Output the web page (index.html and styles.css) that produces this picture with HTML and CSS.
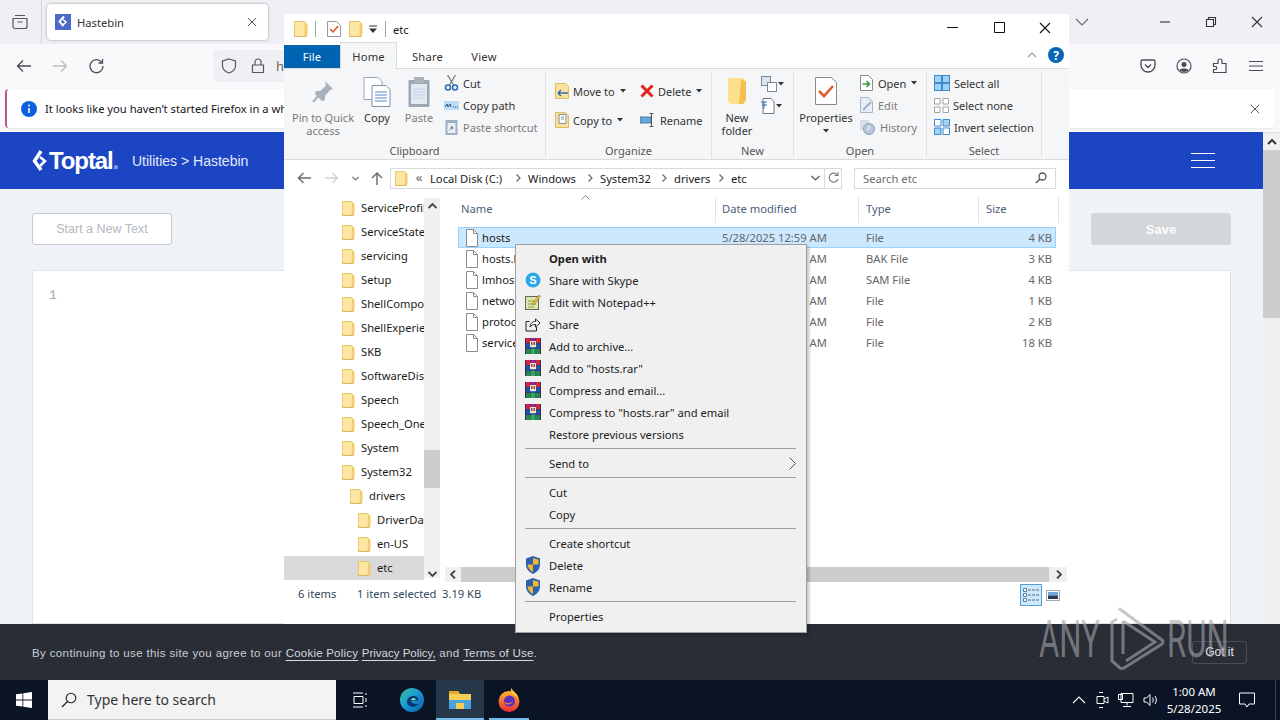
FILE: index.html
```html
<!DOCTYPE html>
<html lang="en">
<head>
<meta charset="utf-8">
<title>Hastebin</title>
<link rel="stylesheet" href="styles.css">
</head>
<body>
<svg class="sprite" aria-hidden="true">
  <symbol id="folder" viewBox="0 0 14 18">
    <path d="M.5 1.500h10l1 1v14H.5z" fill="#fde7a3" stroke="#e3c36f"/>
    <path d="M10.500 2l3 2v11l-2 2h-1z" fill="#f3cd6d"/>
    <path d="M.5 16.500h12" stroke="#dcb65a"/>
  </symbol>
  <symbol id="file" viewBox="0 0 14 18">
    <path d="M1.500 .5h7l4 4v13h-11z" fill="#fff" stroke="#8d8d8d"/>
    <path d="M8.500 .5v4h4" fill="none" stroke="#8d8d8d"/>
  </symbol>
  <symbol id="rar" viewBox="0 0 16 16">
    <rect width="16" height="16" fill="#3b2a55"/>
    <rect x="1" y="0" width="4" height="5" fill="#d0263f"/><rect x="11" y="0" width="4" height="5" fill="#d0263f"/><rect x="5.500" y="0" width="5" height="5" fill="#a3218a"/>
    <rect x="1" y="5.500" width="4" height="5" fill="#2450a8"/><rect x="11" y="5.500" width="4" height="5" fill="#2450a8"/><rect x="5.500" y="5.500" width="5" height="5" fill="#2f7fd0"/>
    <rect x="1" y="11" width="4" height="5" fill="#24894a"/><rect x="11" y="11" width="4" height="5" fill="#24894a"/><rect x="5.500" y="11" width="5" height="5" fill="#30a860"/>
    <rect x="5" y="3" width="6" height="6" fill="#f0e6c8"/>
    <path d="M6.800 4v3M9.200 4v3" stroke="#7a2030" stroke-width="1.200"/>
  </symbol>
  <symbol id="shield" viewBox="0 0 16 18">
    <path d="M8 0l7 2.500v6c0 4.500-3 7.500-7 9.500-4-2-7-5-7-9.500v-6z" fill="#2a62b0"/>
    <path d="M8 2v6.500h5.500V3.800zM8 8.500H2.600C3 12 5 14.500 8 16z" fill="#f3b72e"/>
  </symbol>
  <symbol id="x" viewBox="0 0 12 12"><path d="M1 1l10 10M11 1L1 11" fill="none" stroke="currentColor" stroke-width="1.100"/></symbol>
  <symbol id="caret" viewBox="0 0 6 4"><path d="M0 0h6L3 3.500z" fill="#333"/></symbol>
  <symbol id="crumb" viewBox="0 0 20 10"><path d="M8.500 1.500L12 5 8.500 8.500" fill="none" stroke="#666" stroke-width="1.200"/></symbol>
</svg>

<div class="browser">
  <header class="tabbar">
    <div class="tabs-btn">
      <svg width="16" height="16" viewBox="0 0 16 16"><path d="M3 1.500h10M1 4.500h14v8a2 2 0 0 1-2 2H3a2 2 0 0 1-2-2zM5.500 8h5" fill="none" stroke="#55555e" stroke-width="1.200"/></svg>
    </div>
    <div class="tab">
      <svg class="favicon" width="16" height="16" viewBox="0 0 16 16"><rect width="16" height="16" fill="#4a69c9"/><path d="M9 2.500l-4.500 5 4 4.500" fill="none" stroke="#fff" stroke-width="2"/><path d="M8 5.500l3 2.500-3 3" fill="none" stroke="#fff" stroke-width="1.500"/></svg>
      <span class="tab-title">Hastebin</span>
      <svg class="tab-close" width="10" height="10"><use href="#x"/></svg>
    </div>
    <div class="spacer"></div>
    <svg class="tab-chev" width="14" height="8" viewBox="0 0 14 8"><path d="M1 1l6 6 6-6" fill="none" stroke="#6a6a72" stroke-width="1.100"/></svg>
    <div class="winctl">
      <svg width="12" height="12" viewBox="0 0 12 12"><path d="M1 6h10" stroke="#333" stroke-width="1.100"/></svg>
      <svg width="12" height="12" viewBox="0 0 12 12"><path d="M1.500 3.500h7v7h-7zM3.500 3.500v-2h7v7h-2" fill="none" stroke="#333" stroke-width="1.100"/></svg>
      <svg width="12" height="12"><use href="#x"/></svg>
    </div>
  </header>

  <nav class="navbar">
    <svg class="nav-ico" width="16" height="16" viewBox="0 0 16 16"><path d="M15 8H2M7 2.500L1.500 8 7 13.500" fill="none" stroke="#4a4a52" stroke-width="1.300"/></svg>
    <svg class="nav-ico" width="16" height="16" viewBox="0 0 16 16"><path d="M1 8h13M9 2.500L14.500 8 9 13.500" fill="none" stroke="#bdbdc3" stroke-width="1.300"/></svg>
    <svg class="nav-ico" width="16" height="16" viewBox="0 0 16 16"><path d="M13.500 4A6.500 6.500 0 1 0 15 8M14.500 1v4h-4" fill="none" stroke="#4a4a52" stroke-width="1.300"/></svg>
    <div class="urlbar">
      <svg width="16" height="16" viewBox="0 0 16 16"><path d="M8 1l6.500 2v5c0 3.500-3 5.800-6.500 7-3.500-1.200-6.500-3.500-6.500-7V3z" fill="none" stroke="#55555e" stroke-width="1.200"/></svg>
      <svg width="14" height="16" viewBox="0 0 14 16"><path d="M1.500 7h11v7.500h-11zM4 7V4a3 3 0 0 1 6 0v3" fill="none" stroke="#55555e" stroke-width="1.200"/></svg>
      <span class="url-text">h</span>
    </div>
    <div class="spacer"></div>
    <svg class="nav-r" width="16" height="16" viewBox="0 0 16 16"><path d="M2.500 2h11A1.500 1.500 0 0 1 15 3.500V7A7 7 0 0 1 1 7V3.500A1.500 1.500 0 0 1 2.500 2zM5 6.500L8 9.500l3-3" fill="none" stroke="#4a4a52" stroke-width="1.300"/></svg>
    <svg class="nav-r" width="16" height="16" viewBox="0 0 16 16"><circle cx="8" cy="8" r="7" fill="none" stroke="#4a4a52" stroke-width="1.200"/><circle cx="8" cy="6.500" r="2.500" fill="#4a4a52"/><path d="M3.500 12c1-2 8-2 9 0-2 2.500-7 2.500-9 0z" fill="#4a4a52"/></svg>
    <svg class="nav-r" width="16" height="16" viewBox="0 0 16 16"><path d="M1.500 5.500H6V3a2 2 0 0 1 4 0v2.500h4v9H1.500v-3H4a2 2 0 0 0 0-3H1.500z" fill="none" stroke="#4a4a52" stroke-width="1.200"/></svg>
    <svg class="nav-r" width="16" height="16" viewBox="0 0 16 16"><path d="M1 3.500h14M1 8h14M1 12.500h14" stroke="#4a4a52" stroke-width="1.200"/></svg>
  </nav>

  <div class="infobar">
    <div class="info-inner">
      <svg class="info-ico" width="16" height="16" viewBox="0 0 16 16"><circle cx="8" cy="8" r="8" fill="#0a60df"/><path d="M8 7v5" stroke="#fff" stroke-width="1.600"/><circle cx="8" cy="4.600" r="1" fill="#fff"/></svg>
      <span class="info-text">It looks like you haven’t started Firefox in a while. Do you want to clean it up?</span>
      <svg class="info-close" width="10" height="10"><use href="#x"/></svg>
    </div>
  </div>

  <div class="page">
    <div class="page-main">
      <div class="site">
        <div class="site-header">
          <svg class="brand-mark" width="16" height="24" viewBox="0 0 16 24"><path d="M9 2L2.500 12 9 21" fill="none" stroke="#fff" stroke-width="3.500"/><path d="M8 8l5 4-5 5" fill="none" stroke="#fff" stroke-width="2.500"/></svg>
          <span class="brand">Toptal<span class="brand-dot">.</span></span>
          <span class="crumbs">Utilities &gt; Hastebin</span>
          <div class="spacer"></div>
          <div class="hamburger"><i></i><i></i><i></i></div>
        </div>
        <div class="site-body">
          <div class="actions">
            <button class="btn btn-new" type="button">Start a New Text</button>
            <button class="btn btn-save" type="button">Save</button>
          </div>
          <div class="editor"><span class="line-no">1</span></div>
        </div>
      </div>
      <div class="vscroll">
        <div class="vs-up"><svg width="10" height="6" viewBox="0 0 10 6"><path d="M1 5l4-4 4 4" fill="none" stroke="#333" stroke-width="2"/></svg></div>
        <div class="vs-thumb"></div>
      </div>
    </div>
    <div class="cookie">
      <span class="cookie-text">By continuing to use this site you agree to our <a>Cookie Policy</a> <a class="tight">Privacy Policy,</a> and <a>Terms of Use</a>.</span>
      <button class="got" type="button">Got it</button>
    </div>
  </div>

  <footer class="taskbar">
    <div class="start"><svg width="16" height="16" viewBox="0 0 16 16"><path d="M0 2.300l6.500-.9v6.200H0zM7.300 1.300L16 0v7.600H7.300zM0 8.400h6.500v6.200L0 13.700zM7.300 8.400H16V16l-8.700-1.300z" fill="#fff"/></svg></div>
    <div class="search">
      <svg width="16" height="16" viewBox="0 0 16 16"><circle cx="10" cy="6" r="4.800" fill="none" stroke="#222" stroke-width="1.100"/><path d="M6.500 9.500L1 15" stroke="#222" stroke-width="1.300"/></svg>
      <span>Type here to search</span>
    </div>
    <div class="tb-btn"><svg width="16" height="16" viewBox="0 0 16 16"><path d="M1 1h10M1 15h10M2 4.500h9v7H2zM14 1v2M14 6v4M14 13v2" fill="none" stroke="#fff"/></svg></div>
    <div class="tb-btn"><svg width="26" height="26" viewBox="0 0 26 26"><defs><linearGradient id="edgeg" x1="0" y1="0" x2="1" y2="1"><stop offset="0" stop-color="#35c98f"/><stop offset=".45" stop-color="#1b9bd8"/><stop offset="1" stop-color="#0b5fa8"/></linearGradient></defs><circle cx="13" cy="13" r="12" fill="url(#edgeg)"/><path d="M8 15c0-5 5-7 9-5.500 2 1 2.500 2.500 2.500 4H12c0 3 4 4.500 8 3-3 5-12 4-12-1.500z" fill="#0a3b70"/><path d="M12 13c.5-2.500 4-3 5 0z" fill="#7fe0c0"/></svg></div>
    <div class="tb-btn tb-active"><svg width="24" height="20" viewBox="0 0 24 20"><path d="M1 1h9l2 3h11v15H1z" fill="#f6cf58"/><path d="M1 1h9l2 3H1z" fill="#e6a92a"/><rect x="1" y="10" width="22" height="9" fill="#4aa3dd"/><rect x="8" y="13" width="8" height="6" fill="#f6cf58"/></svg></div>
    <div class="tb-btn tb-run"><svg width="24" height="24" viewBox="0 0 24 24"><defs><linearGradient id="ffg" x1="0" y1="0" x2="0" y2="1"><stop offset="0" stop-color="#ffb52e"/><stop offset="1" stop-color="#e8293b"/></linearGradient></defs><circle cx="12" cy="13.500" r="10.500" fill="url(#ffg)"/><path d="M14 0c2 3 6 5 7 10-3-3-8-4-7-10z" fill="#ffc93a"/><circle cx="12.500" cy="13" r="5.500" fill="#5b2fc0"/><path d="M7 13c2 3 7 3 9 0-1 4-8 5-9 0z" fill="#ff8a2e"/></svg></div>
    <div class="spacer"></div>
    <div class="tray">
      <svg width="14" height="8" viewBox="0 0 14 8"><path d="M1 7l6-6 6 6" fill="none" stroke="#fff" stroke-width="1.100"/></svg>
      <svg width="14" height="18" viewBox="0 0 14 18"><path d="M4 1.500h4M4 16.500h4M2 5.500h7v7H2zM9 8l4-2v6l-4-2" fill="none" stroke="#fff"/></svg>
      <svg width="16" height="16" viewBox="0 0 16 16"><path d="M3 1.500h12v9H3zM.5 2.500h4v5h-4zM9 10.500v3M5 14.500h8" fill="#0a1424" stroke="#fff"/></svg>
      <svg width="16" height="14" viewBox="0 0 16 14"><path d="M1 5h2.500L7 1.500v11L3.500 9H1zM9.500 4.500c1 1.500 1 3.500 0 5M12 3c1.800 2.500 1.800 5.500 0 8" fill="none" stroke="#fff"/></svg>
    </div>
    <div class="clock"><span>1:00 AM</span><span>5/28/2025</span></div>
    <div class="notif"><svg width="16" height="16" viewBox="0 0 16 16"><path d="M.5 1h15v11H10l-2 3-2-3H.5z" fill="none" stroke="#fff"/></svg></div>
    <div class="desk-edge"></div>
  </footer>
</div>

<section class="explorer">
  <div class="ex-title">
    <svg width="14" height="18"><use href="#folder"/></svg>
    <i class="t-sep"></i>
    <svg class="t-doc" width="14" height="16" viewBox="0 0 14 16"><path d="M.5.500h9l4 4v11H.5z" fill="#fff" stroke="#9a9a9a"/><path d="M3 8l3 3 5-6" fill="none" stroke="#d9532c" stroke-width="1.500"/></svg>
    <svg width="14" height="18"><use href="#folder"/></svg>
    <svg class="t-drop" width="8" height="8" viewBox="0 0 8 8"><path d="M0 1h8" stroke="#333"/><path d="M0 3.500h8L4 8z" fill="#333"/></svg>
    <i class="t-sep t-sep2"></i>
    <span class="t-name">etc</span>
    <div class="spacer"></div>
    <svg class="wc wc-min" width="12" height="12" viewBox="0 0 12 12"><path d="M0 5.500h11" stroke="#111"/></svg>
    <svg class="wc wc-max" width="12" height="12" viewBox="0 0 12 12"><path d="M.5.500h10v10H.5z" fill="none" stroke="#111"/></svg>
    <svg class="wc wc-close" width="12" height="12"><use href="#x"/></svg>
  </div>

  <div class="ex-tabs">
    <span class="ex-tab ex-file">File</span>
    <span class="ex-tab ex-home">Home</span>
    <span class="ex-tab ex-share">Share</span>
    <span class="ex-tab ex-view">View</span>
    <div class="spacer"></div>
    <svg class="collapse" width="10" height="6" viewBox="0 0 10 6"><path d="M1 5l4-4 4 4" fill="none" stroke="#9a9a9a" stroke-width="1.200"/></svg>
    <span class="help">?</span>
  </div>

  <div class="ribbon">
    <div class="group g-clip">
      <div class="g-body">
        <div class="big dim b-pin">
          <svg width="24" height="24" viewBox="0 0 24 24"><path d="M14 2l8 8-3 1-5 6 0 4-3 1-7-7 1-3 4 0 6-5z" fill="#a7b0bb"/><path d="M8 16l-6 7" stroke="#a7b0bb" stroke-width="2"/></svg>
          <span>Pin to Quick<br>access</span>
        </div>
        <div class="big b-copy">
          <svg width="30" height="30" viewBox="0 0 30 30"><path d="M2 .5h14l4 4v18H2z" fill="#fff" stroke="#9aa6b4"/><path d="M10 8.500h14l4 4v17H10z" fill="#fff" stroke="#7f93ab"/><path d="M13 15h12M13 18h12M13 21h12M13 24h12" stroke="#4e8bd0"/></svg>
          <span>Copy</span>
        </div>
        <div class="big dim b-paste">
          <svg width="22" height="30" viewBox="0 0 22 30"><rect x=".5" y="3" width="21" height="27" rx="1" fill="#9ca7b3"/><rect x="3" y="7" width="16" height="20" fill="#e3e9f3"/><rect x="6" y="0" width="10" height="6" fill="#aab3bd"/><path d="M5 12h12M5 15h12M5 18h12M5 21h12" stroke="#c2d0e3"/></svg>
          <span>Paste</span>
        </div>
        <div class="small-col c-clip">
          <div class="sm"><svg width="14" height="16" viewBox="0 0 14 16"><path d="M3 0l6 10M11 0L5 10" stroke="#777" stroke-width="1.200"/><circle cx="3.500" cy="12.500" r="2.500" fill="none" stroke="#2a6db5" stroke-width="1.500"/><circle cx="10.500" cy="12.500" r="2.500" fill="none" stroke="#2a6db5" stroke-width="1.500"/></svg><span>Cut</span></div>
          <div class="sm"><svg width="15" height="9" viewBox="0 0 15 9"><rect width="15" height="9" fill="#bcdcf6"/><path d="M1 6l2-3 1 3 2-3 1 3M9 6h1M11 6h1M13 6h1" fill="none" stroke="#33517a"/></svg><span>Copy path</span></div>
          <div class="sm dim"><svg width="12" height="15" viewBox="0 0 12 15"><rect width="12" height="15" fill="#9fb0c2"/><rect x="2" y="3" width="8" height="10" fill="#e9eef5"/><path d="M4 10l3-3M5 7h2v2" fill="none" stroke="#5a6a7a"/></svg><span>Paste shortcut</span></div>
        </div>
      </div>
      <div class="g-label">Clipboard</div>
    </div>

    <div class="group g-org">
      <div class="g-body">
        <div class="small-col two c-org1">
          <div class="sm"><svg width="14" height="16" viewBox="0 0 14 16"><path d="M.5.500h10l3 3v12H.5z" fill="#fbe29a" stroke="#e0bd61"/><path d="M3 10h10M3 10l3-3M3 10l3 3" fill="none" stroke="#2b70b8" stroke-width="1.500"/></svg><span>Move to</span><svg class="cr" width="6" height="4"><use href="#caret"/></svg></div>
          <div class="sm"><svg width="14" height="16" viewBox="0 0 14 16"><path d="M.5.500h10l3 3v12H.5z" fill="#fbe29a" stroke="#e0bd61"/><path d="M4 2.500h7v9H4z" fill="#fff" stroke="#7f8c9a"/><path d="M6 5h3M6 7h3" stroke="#7f8c9a"/></svg><span>Copy to</span><svg class="cr" width="6" height="4"><use href="#caret"/></svg></div>
        </div>
        <div class="small-col two c-org2">
          <div class="sm"><svg width="14" height="14" viewBox="0 0 14 14"><path d="M1.500 1.500l11 11M12.500 1.500l-11 11" stroke="#e0231c" stroke-width="3"/></svg><span>Delete</span><svg class="cr" width="6" height="4"><use href="#caret"/></svg></div>
          <div class="sm"><svg width="16" height="14" viewBox="0 0 16 14"><rect x="0" y="4" width="11" height="6" fill="#6aa5db" stroke="#4a78a8"/><path d="M11.500 1v12M9.500 .5h4M9.500 13.500h4" stroke="#555"/></svg><span>Rename</span></div>
        </div>
      </div>
      <div class="g-label">Organize</div>
    </div>

    <div class="group g-new">
      <div class="g-body">
        <div class="big b-nf">
          <svg width="20" height="28" viewBox="0 0 20 28"><path d="M1 1h15l3 3v19l-3 4H4l-3-2z" fill="#fde08b"/><path d="M14 2l5 3v18l-3 4h-4z" fill="#f4c04f"/></svg>
          <span>New<br>folder</span>
        </div>
        <div class="new-minis">
          <div class="mini"><svg width="16" height="16" viewBox="0 0 16 16"><rect x=".5" y=".5" width="9" height="9" fill="#d9e6f2" stroke="#7a8898"/><rect x="6.500" y="6.500" width="9" height="9" fill="#fff" stroke="#7a8898"/></svg><svg class="cr" width="6" height="4"><use href="#caret"/></svg></div>
          <div class="mini"><svg width="14" height="16" viewBox="0 0 14 16"><path d="M2 .5h8l3 3v12H2z" fill="#fff" stroke="#6d7a88"/><path d="M0 4h6M1 7h5M3 4v7" stroke="#2a6db5"/></svg><svg class="cr" width="6" height="4"><use href="#caret"/></svg></div>
        </div>
      </div>
      <div class="g-label">New</div>
    </div>

    <div class="group g-open">
      <div class="g-body">
        <div class="big b-prop">
          <svg width="22" height="28" viewBox="0 0 22 28"><path d="M.5.500h16l5 5v22H.5z" fill="#fff" stroke="#8b8b8b"/><path d="M4 14l5 5 9-10" fill="none" stroke="#de5a32" stroke-width="2.600"/></svg>
          <span>Properties</span>
          <svg class="cr" width="6" height="4"><use href="#caret"/></svg>
        </div>
        <div class="small-col c-open">
          <div class="sm"><svg width="13" height="16" viewBox="0 0 13 16"><path d="M.5.500h8l4 4v11H.5z" fill="#fff" stroke="#8b8b8b"/><path d="M2.500 9h7M6.500 6l3 3-3 3" fill="none" stroke="#2f9a3f" stroke-width="1.500"/></svg><span>Open</span><svg class="cr" width="6" height="4"><use href="#caret"/></svg></div>
          <div class="sm dim"><svg width="13" height="16" viewBox="0 0 13 16"><path d="M.5.500h8l4 4v11H.5z" fill="#e8eef6" stroke="#aab6c4"/><path d="M3 13l8-8" stroke="#9ab0c8" stroke-width="2"/></svg><span>Edit</span></div>
          <div class="sm dim"><svg width="15" height="15" viewBox="0 0 15 15"><rect width="9" height="10" fill="#d6dde6"/><circle cx="9" cy="9" r="5.500" fill="#b9c8da" stroke="#8aa0b8"/><path d="M9 6v3l-2 1" fill="none" stroke="#fff"/></svg><span>History</span></div>
        </div>
      </div>
      <div class="g-label">Open</div>
    </div>

    <div class="group g-sel">
      <div class="g-body">
        <div class="small-col c-sel">
          <div class="sm"><svg width="16" height="16" viewBox="0 0 16 16"><rect width="16" height="16" fill="#3c8bcc"/><rect x="1" y="1" width="6" height="6" fill="#9fd2f5"/><rect x="9" y="1" width="6" height="6" fill="#9fd2f5"/><rect x="1" y="9" width="6" height="6" fill="#9fd2f5"/><rect x="9" y="9" width="6" height="6" fill="#9fd2f5"/></svg><span>Select all</span></div>
          <div class="sm"><svg width="15" height="15" viewBox="0 0 15 15"><path d="M.5.500h5.500V6H.5zM9 .5h5.500V6H9zM.5 9H6v5.500H.5zM9 9h5.500v5.500H9z" fill="#fff" stroke="#a5a5a5"/></svg><span>Select none</span></div>
          <div class="sm"><svg width="16" height="16" viewBox="0 0 16 16"><path d="M.5 9H7v6.500H.5zM9 .5h6.500V7H9z" fill="#9fd2f5" stroke="#3c8bcc"/><path d="M.5.500H7V7H.5zM9 9h6.500v6.500H9z" fill="#fff" stroke="#3c8bcc"/></svg><span>Invert selection</span></div>
        </div>
      </div>
      <div class="g-label">Select</div>
    </div>
  </div>

  <div class="addr-row">
    <svg width="14" height="12" viewBox="0 0 14 12"><path d="M14 6H2M6.500 1L1.500 6l5 5" fill="none" stroke="#6d6d6d" stroke-width="1.500"/></svg>
    <svg class="ar-fwd" width="14" height="12" viewBox="0 0 14 12"><path d="M0 6h12M7.500 1l5 5-5 5" fill="none" stroke="#d0d0d0" stroke-width="1.300"/></svg>
    <svg class="ar-down" width="7" height="5" viewBox="0 0 7 5"><path d="M.5 1L3.500 4l3-3" fill="none" stroke="#777" stroke-width="1.200"/></svg>
    <svg class="ar-up" width="12" height="14" viewBox="0 0 12 14"><path d="M6 14V2M1 7l5-5 5 5" fill="none" stroke="#6d6d6d" stroke-width="1.500"/></svg>
    <div class="addr">
      <svg width="13" height="17"><use href="#folder"/></svg>
      <span class="pre">«</span>
      <span class="seg s1">Local Disk (C:)</span><svg width="20" height="10"><use href="#crumb"/></svg>
      <span class="seg s2">Windows</span><svg width="20" height="10"><use href="#crumb"/></svg>
      <span class="seg s3">System32</span><svg width="20" height="10"><use href="#crumb"/></svg>
      <span class="seg s4">drivers</span><svg width="20" height="10"><use href="#crumb"/></svg>
      <span class="seg">etc</span>
      <div class="spacer"></div>
      <svg class="addr-chev" width="9" height="6" viewBox="0 0 9 6"><path d="M.5 1l4 4 4-4" fill="none" stroke="#555" stroke-width="1.200"/></svg>
      <span class="addr-ref"><svg width="11" height="12" viewBox="0 0 11 12"><path d="M9 2.500A4.500 4.500 0 1 0 10 7M10 0v3.500H6.500" fill="none" stroke="#777" stroke-width="1.100"/></svg></span>
    </div>
    <div class="ex-search">
      <span>Search etc</span>
      <svg width="12" height="12" viewBox="0 0 12 12"><circle cx="7.500" cy="4.500" r="3.500" fill="none" stroke="#555" stroke-width="1.300"/><path d="M5 7l-4 4" stroke="#555" stroke-width="1.600"/></svg>
    </div>
  </div>

  <div class="ex-main">
    <div class="tree">
      <div class="tree-list">
        <div class="tr l1"><svg width="13" height="17"><use href="#folder"/></svg><span>ServiceProfiles</span></div>
        <div class="tr l1"><svg width="13" height="17"><use href="#folder"/></svg><span>ServiceState</span></div>
        <div class="tr l1"><svg width="13" height="17"><use href="#folder"/></svg><span>servicing</span></div>
        <div class="tr l1"><svg width="13" height="17"><use href="#folder"/></svg><span>Setup</span></div>
        <div class="tr l1"><svg width="13" height="17"><use href="#folder"/></svg><span>ShellComponents</span></div>
        <div class="tr l1"><svg width="13" height="17"><use href="#folder"/></svg><span>ShellExperiences</span></div>
        <div class="tr l1"><svg width="13" height="17"><use href="#folder"/></svg><span>SKB</span></div>
        <div class="tr l1"><svg width="13" height="17"><use href="#folder"/></svg><span>SoftwareDistribution</span></div>
        <div class="tr l1"><svg width="13" height="17"><use href="#folder"/></svg><span>Speech</span></div>
        <div class="tr l1"><svg width="13" height="17"><use href="#folder"/></svg><span>Speech_OneCore</span></div>
        <div class="tr l1"><svg width="13" height="17"><use href="#folder"/></svg><span>System</span></div>
        <div class="tr l1"><svg width="13" height="17"><use href="#folder"/></svg><span>System32</span></div>
        <div class="tr l2"><svg width="13" height="17"><use href="#folder"/></svg><span>drivers</span></div>
        <div class="tr l3"><svg width="13" height="17"><use href="#folder"/></svg><span>DriverData</span></div>
        <div class="tr l3"><svg width="13" height="17"><use href="#folder"/></svg><span>en-US</span></div>
        <div class="tr l3 tr-sel"><svg width="13" height="17"><use href="#folder"/></svg><span>etc</span></div>
      </div>
      <div class="tree-scroll">
        <svg width="9" height="6" viewBox="0 0 9 6"><path d="M.5 5l4-4 4 4" fill="none" stroke="#444" stroke-width="1.800"/></svg>
        <div class="ts-thumb"></div>
        <svg width="9" height="6" viewBox="0 0 9 6"><path d="M.5 1l4 4 4-4" fill="none" stroke="#444" stroke-width="1.800"/></svg>
      </div>
    </div>

    <div class="files">
      <div class="f-head">
        <span class="h-name">Name</span><span class="h-date">Date modified</span><span class="h-type">Type</span><span class="h-size">Size</span>
        <svg class="sort" width="9" height="5" viewBox="0 0 9 5"><path d="M.5 4.500l4-4 4 4" fill="none" stroke="#888"/></svg>
      </div>
      <div class="f-list">
        <div class="f-row f-sel"><svg width="14" height="18"><use href="#file"/></svg><span class="c-name">hosts</span><span class="c-date">5/28/2025 12:59 AM</span><span class="c-type">File</span><span class="c-size">4 KB</span></div>
        <div class="f-row"><svg width="14" height="18"><use href="#file"/></svg><span class="c-name">hosts.bak</span><span class="c-date">5/28/2025 12:59 AM</span><span class="c-type">BAK File</span><span class="c-size">3 KB</span></div>
        <div class="f-row"><svg width="14" height="18"><use href="#file"/></svg><span class="c-name">lmhosts.sam</span><span class="c-date">5/28/2025 12:59 AM</span><span class="c-type">SAM File</span><span class="c-size">4 KB</span></div>
        <div class="f-row"><svg width="14" height="18"><use href="#file"/></svg><span class="c-name">networks</span><span class="c-date">5/28/2025 12:59 AM</span><span class="c-type">File</span><span class="c-size">1 KB</span></div>
        <div class="f-row"><svg width="14" height="18"><use href="#file"/></svg><span class="c-name">protocol</span><span class="c-date">5/28/2025 12:59 AM</span><span class="c-type">File</span><span class="c-size">2 KB</span></div>
        <div class="f-row"><svg width="14" height="18"><use href="#file"/></svg><span class="c-name">services</span><span class="c-date">5/28/2025 12:59 AM</span><span class="c-type">File</span><span class="c-size">18 KB</span></div>
      </div>
      <div class="hscroll">
        <span class="hs-btn"><svg width="6" height="9" viewBox="0 0 6 9"><path d="M5 .5l-4 4 4 4" fill="none" stroke="#444" stroke-width="1.800"/></svg></span>
        <div class="hs-thumb"></div>
        <span class="hs-btn"><svg width="6" height="9" viewBox="0 0 6 9"><path d="M1 .5l4 4-4 4" fill="none" stroke="#444" stroke-width="1.800"/></svg></span>
      </div>
    </div>
  </div>

  <div class="ex-status">
    <span class="st1">6 items</span><span class="st2">1 item selected</span><span class="st3">3.19 KB</span>
    <div class="spacer"></div>
    <span class="view-btn view-on"><svg width="16" height="14" viewBox="0 0 16 14"><path d="M.5.500h3v3h-3zM.5 5.500h3v3h-3zM.5 10.500h3v3h-3z" fill="#fff" stroke="#5a7a9a"/><path d="M5 2h3M9 2h3M13 2h3M5 7h3M9 7h3M13 7h3M5 12h3M9 12h3M13 12h3" stroke="#5a6a7a"/></svg></span>
    <span class="view-btn"><svg width="14" height="11" viewBox="0 0 14 11"><rect x=".5" y=".5" width="13" height="10" fill="#fff" stroke="#a0a8b0"/><rect x="2" y="2" width="10" height="3.500" fill="#6fa8dc"/><rect x="2" y="5.500" width="10" height="3.500" fill="#2b3a55"/></svg></span>
  </div>
</section>

<ul class="ctx">
  <li class="m-it strong">Open with</li>
  <li class="m-it"><svg class="m-ico" width="16" height="16" viewBox="0 0 16 16"><circle cx="8" cy="8" r="7.500" fill="#2aa8e8"/><text class="sk" x="8" y="12" text-anchor="middle">S</text></svg>Share with Skype</li>
  <li class="m-it"><svg class="m-ico" width="16" height="16" viewBox="0 0 16 16"><rect x=".5" y="2.500" width="13" height="13" fill="#dfe6a8" stroke="#666"/><path d="M3 7h8M3 10h8M3 13h6" stroke="#8da04a"/><path d="M7 10l7-9 1.500 1.200L9 11z" fill="#e8c23a" stroke="#7a5a1a" stroke-width=".5"/></svg>Edit with Notepad++</li>
  <li class="m-it"><svg class="m-ico" width="16" height="16" viewBox="0 0 16 16"><path d="M4.500 5.500H1v9.500h10.500V11" fill="none" stroke="#222"/><path d="M5 11c0-4 3-5.500 5.500-5.500V3L15 7l-4.500 4V8.500C8 8.500 6 9 5 11z" fill="#fff" stroke="#222"/></svg>Share</li>
  <li class="m-it"><svg class="m-ico" width="16" height="16"><use href="#rar"/></svg>Add to archive...</li>
  <li class="m-it"><svg class="m-ico" width="16" height="16"><use href="#rar"/></svg>Add to "hosts.rar"</li>
  <li class="m-it"><svg class="m-ico" width="16" height="16"><use href="#rar"/></svg>Compress and email...</li>
  <li class="m-it"><svg class="m-ico" width="16" height="16"><use href="#rar"/></svg>Compress to "hosts.rar" and email</li>
  <li class="m-it">Restore previous versions</li>
  <li class="m-sep"></li>
  <li class="m-it">Send to<svg class="m-arrow" width="7" height="13" viewBox="0 0 7 13"><path d="M.5.500l6 6-6 6" fill="none" stroke="#555"/></svg></li>
  <li class="m-sep"></li>
  <li class="m-it">Cut</li>
  <li class="m-it">Copy</li>
  <li class="m-sep"></li>
  <li class="m-it">Create shortcut</li>
  <li class="m-it"><svg class="m-ico" width="16" height="18"><use href="#shield"/></svg>Delete</li>
  <li class="m-it"><svg class="m-ico" width="16" height="18"><use href="#shield"/></svg>Rename</li>
  <li class="m-sep"></li>
  <li class="m-it">Properties</li>
</ul>

<div class="watermark">
  <span class="wm-t">ANY</span>
  <svg width="56" height="66" viewBox="0 0 56 66"><path d="M10 1.500L53 33q2 2 0 4L15 61q-2 1-4 0L3 54V15l5-3" fill="none" stroke="currentColor" stroke-width="3"/><path d="M14 14L46 35 17 54" fill="none" stroke="currentColor" stroke-width="3"/><path d="M14 14V47" fill="none" stroke="currentColor" stroke-width="3"/></svg>
  <span class="wm-t">RUN</span>
</div>
</body>
</html>
```

FILE: styles.css
```css
* { box-sizing: border-box; }
html, body { margin: 0; padding: 0; width: 1280px; height: 720px; overflow: hidden; }
body { font-family: "Noto Sans", sans-serif; font-size: 11.2px; color: #1a1a1a; background: #fff; position: relative; }
svg { display: block; flex: none; }
.sprite { position: absolute; width: 0; height: 0; }
.spacer { flex: 1; }
ul { list-style: none; margin: 0; padding: 0; }
button { font-family: inherit; }

.browser { display: flex; flex-direction: column; height: 720px; }

/* Tabs */
.tabbar { height: 44px; background: #f0f0f4; display: flex; align-items: center; flex: none; }
.tabs-btn { width: 42px; height: 44px; display: flex; align-items: center; justify-content: center; border-right: 1px solid #d4d4d8; margin-right: 5px; padding-right: 2px; }
.tab { width: 221px; height: 36px; background: #fff; border-radius: 4px; box-shadow: 0 0 3px rgba(0,0,0,.35); display: flex; align-items: center; padding: 0 11px 0 8px; }
.tab-title { margin-left: 6px; font-size: 11.2px; color: #333; flex: 1; }
.tab-close { color: #444; }
.tab-chev { margin-right: 70px; }
.winctl { display: flex; gap: 34px; margin-right: 17px; color: #333; }

/* Nav */
.navbar { height: 44px; background: #f9f9fb; display: flex; align-items: center; padding-left: 16px; flex: none; }
.nav-ico { margin-right: 20px; }
.urlbar { margin-left: 89px; width: 200px; height: 32px; background: #f0f0f4; border-radius: 4px; display: flex; align-items: center; gap: 14px; padding-left: 8px; }
.url-text { font-size: 13px; color: #666; margin-left: -3px; }
.nav-r { margin-right: 20px; }
.nav-r:last-child { margin-right: 16px; }

/* Info */
.infobar { height: 44px; background: #f9f9fb; padding: 1px 5px 4px 5px; flex: none; }
.info-inner { height: 39px; background: #fff; border-radius: 4px; border-left: 2px solid #b8568f; display: flex; align-items: center; padding-left: 14px; box-shadow: 0 1px 2px rgba(0,0,0,.08); }
.info-ico { margin-right: 8px; }
.info-text { font-size: 11.2px; color: #15141a; flex: 1; }
.info-close { color: #444; margin-right: 15px; }

/* Page */
.page { flex: 1; display: flex; flex-direction: column; min-height: 0; }
.page-main { flex: 1; display: flex; min-height: 0; }
.site { flex: 1; display: flex; flex-direction: column; min-height: 0; }
.site-header { height: 57px; background: #1c45c4; display: flex; align-items: center; padding-left: 32px; color: #fff; flex: none; }
.brand-mark { margin-right: 1px; }
.brand { font-family: "Liberation Sans", sans-serif; font-size: 24px; font-weight: 700; letter-spacing: -1.1px; width: 68px; flex: none; }
.brand-dot { color: #8aa0e8; }
.crumbs { font-family: "Liberation Sans", sans-serif; font-size: 14px; margin: 1px 0 0 15px; color: #e4e9fa; }
.hamburger { width: 24px; margin-right: 48px; display: flex; flex-direction: column; gap: 6px; }
.hamburger i { display: block; height: 1px; background: #fff; }
.site-body { flex: 1; background: #eff2f6; padding: 24px 32px 0; display: flex; flex-direction: column; min-height: 0; }
.actions { display: flex; justify-content: space-between; height: 32px; flex: none; }
.btn { width: 140px; height: 32px; border-radius: 3px; font-family: "Liberation Sans", sans-serif; font-size: 12.5px; }
.btn-new { background: #fff; border: 1px solid #c6cad0; color: #b4b8be; }
.btn-save { background: #d4d7da; border: none; color: #fdfdfd; font-weight: 700; font-size: 13px; }
.editor { margin-top: 25px; flex: 1; background: #fff; border: 1px solid #dfe2e7; padding: 16px 0 0 16px; }
.line-no { font-family: "Liberation Mono", monospace; font-size: 13px; color: #a8a8a8; }
.vscroll { width: 17px; background: #f0f0f0; flex: none; display: flex; flex-direction: column; }
.vs-up { height: 18px; display: flex; align-items: center; justify-content: center; background: #f0f0f0; border-top: 1px solid #ddd; }
.vs-thumb { height: 168px; background: #cdcdcd; }

.cookie { height: 56px; background: #292d36; color: #c9ccd2; flex: none; display: flex; align-items: center; padding: 0 33px 0 32px; justify-content: space-between; font-family: "Liberation Sans", sans-serif; font-size: 11.5px; letter-spacing: .37px; }
.cookie-text { margin-top: 2px; }
.cookie a { color: #d5d8dd; text-decoration: underline; text-underline-offset: 3px; letter-spacing: .22px; }
.cookie a.tight { letter-spacing: 0; }
.got { width: 55px; height: 23px; background: transparent; border: 1px solid #4a4e57; border-radius: 3px; color: #e2e4e8; font-family: "Liberation Sans", sans-serif; font-size: 12px; letter-spacing: 0; }

/* Taskbar */
.taskbar { height: 40px; background: #0a1424; display: flex; align-items: center; flex: none; color: #fff; }
.start { width: 48px; display: flex; justify-content: center; }
.search { width: 288px; height: 40px; background: #f3f3f3; display: flex; align-items: center; padding-left: 13px; border-bottom: 1px solid #ccc; }
.search span { font-size: 14px; color: #333; margin-left: 10px; }
.tb-btn { width: 48px; height: 40px; display: flex; align-items: center; justify-content: center; position: relative; }
.search + .tb-btn { margin-right: 4px; }
.tb-active { background: #26384a; }
.tb-active::after, .tb-run::after { content: ""; position: absolute; left: 0; right: 0; bottom: 0; height: 2px; background: #76b9ed; }
.tb-run::after { left: 4px; right: 4px; }
.tb-run { margin-left: 1px; }
.tray { display: flex; align-items: center; gap: 9px; margin-right: 4px; }
.clock { width: 62px; display: flex; flex-direction: column; align-items: center; font-size: 11.500px; line-height: 17px; }
.notif { width: 44px; display: flex; justify-content: center; margin-right: 6px; }
.desk-edge { width: 1px; height: 40px; background: #34404f; margin-right: 4px; }

/* Explorer */
.explorer { position: absolute; left: 284px; top: 14px; width: 785px; height: 610px; background: #fff; display: flex; flex-direction: column; }
.ex-title { height: 28px; display: flex; align-items: center; padding: 2px 0 0 10px; flex: none; }
.t-sep { width: 1px; height: 16px; background: #a0a0a0; margin: 0 11px 0 7px; }
.t-doc { margin-right: 8px; }
.t-drop { margin-left: 6px; }
.t-sep2 { margin: 0 7px 0 8px; }
.t-name { font-size: 11.2px; }
.wc { color: #111; margin-top: -2px; }
.wc-min { margin-right: 35px; }
.wc-max { margin-right: 33px; }
.wc-close { margin-right: 18px; }

.ex-tabs { height: 27px; display: flex; align-items: flex-end; flex: none; border-bottom: 1px solid #dadbdc; position: relative; }
.ex-tab { height: 24px; display: flex; align-items: center; justify-content: center; color: #333; letter-spacing: .2px; }
.ex-file { width: 56px; background: #0063b1; color: #fff; height: 23px; }
.ex-home { width: 57px; background: #f5f6f7; border: 1px solid #dadbdc; border-bottom: none; height: 27px; margin-bottom: -1px; }
.ex-share { width: 61px; }
.ex-view { width: 52px; }
.collapse { margin: 0 11px 10px 0; }
.help { width: 16px; height: 16px; border-radius: 50%; background: #0b66b5; color: #fff; font-weight: 700; font-size: 12px; display: flex; align-items: center; justify-content: center; margin: 0 5px 5px 0; }

.ribbon { height: 91px; background: #f5f6f7; border-bottom: 1px solid #dadbdc; display: flex; flex: none; font-size: 11px; }
.group { display: flex; flex-direction: column; border-right: 1px solid #e2e3e4; margin: 3px 0 1px; }
.g-body { flex: 1; display: flex; min-height: 0; position: relative; }
.g-label { height: 15px; line-height: 15px; text-align: center; color: #555; }
.g-clip { width: 262px; }
.g-org { width: 166px; }
.g-new { width: 82px; }
.g-open { width: 133px; }
.g-sel { width: 115px; }
.big { display: flex; flex-direction: column; align-items: center; text-align: center; line-height: 13px; color: #333; }
.big svg:first-child { height: 30px; margin-bottom: 4px; }
.big.dim span, .sm.dim span { color: #7a7a7a; }
.b-pin { width: 78px; padding-top: 7px; }
.b-pin svg:first-child { height: 24px; margin-bottom: 8px; }
.b-copy { width: 30px; padding-top: 5px; }
.b-paste { width: 54px; padding-top: 5px; }
.small-col { display: flex; flex-direction: column; }
.sm { height: 22px; display: flex; align-items: center; color: #333; white-space: nowrap; }
.sm svg:first-child { margin-right: 4px; }
.sm .cr { margin-left: 5px; }
.c-clip { margin-left: -2px; }
.c-clip .sm svg:first-child { width: 15px; }
.two { padding-top: 8px; gap: 7px; }
.c-org1 { margin-left: 9px; width: 85px; }
.c-org2 { width: 70px; }
.b-nf { width: 48px; margin-left: 1px; padding-top: 5px; }
.b-nf svg:first-child { height: 28px; margin-bottom: 6px; }
.new-minis { display: flex; flex-direction: column; gap: 6px; padding-top: 4px; }
.mini { display: flex; align-items: center; gap: 1px; height: 16px; }
.b-prop { width: 60px; margin-left: 2px; padding-top: 5px; }
.b-prop svg:first-child { height: 28px; margin-bottom: 6px; }
.b-prop .cr { margin-top: 5px; }
.c-open { margin-left: 4px; }
.c-open .sm svg:first-child { margin-right: 5px; }
.c-sel { margin-left: 7px; }

.addr-row { height: 36px; display: flex; align-items: center; padding-left: 13px; flex: none; }
.ar-fwd { margin-left: 14px; }
.ar-down { margin-left: 13px; }
.ar-up { margin-left: 12px; }
.addr { margin-left: 7px; width: 452px; height: 21px; border: 1px solid #d9d9d9; display: flex; align-items: center; padding-left: 4px; }
.addr .pre { width: 22px; text-align: center; margin-bottom: 2px; color: #666; font-size: 13px; }
.seg { white-space: nowrap; flex: none; }
.s1 { width: 78px; }
.s2 { width: 52px; }
.s3 { width: 54px; }
.s4 { width: 37px; }
.addr-chev { margin-right: 4px; }
.addr-ref { width: 17px; height: 19px; border-left: 1px solid #d9d9d9; display: flex; align-items: center; justify-content: center; }
.ex-search { margin-left: 12px; width: 202px; height: 21px; border: 1px solid #d9d9d9; display: flex; align-items: center; justify-content: space-between; padding: 0 8px; color: #6d6d6d; }

.ex-main { height: 386px; display: flex; flex: none; }
.tree { width: 157px; display: flex; flex: none; }
.tree-list { width: 140px; overflow: hidden; height: 384px; }
.tr { height: 24px; display: flex; align-items: center; white-space: nowrap; }
.tr svg { margin-right: 6px; }
.tr span { margin-bottom: 2px; }
.l1 { padding-left: 58px; }
.l2 { padding-left: 66px; }
.l3 { padding-left: 74px; }
.tr-sel { background: #d9d9d9; }
.tree-scroll { width: 16px; margin-top: 2px; height: 380px; background: #f0f0f0; display: flex; flex-direction: column; align-items: center; padding-top: 5px; }
.ts-thumb { width: 16px; height: 38px; background: #cdcdcd; margin-top: 241px; margin-bottom: 83px; }

.files { flex: 1; display: flex; flex-direction: column; padding-left: 4px; min-width: 0; position: relative; }
.f-head { height: 26px; margin-top: 1px; display: flex; position: relative; color: #4c607a; flex: none; }
.f-head span { border-right: 1px solid #e5e5e5; height: 26px; display: flex; align-items: flex-start; padding: 4px 0 0 7px; }
.h-name { width: 271px; padding-left: 16px !important; }
.h-date { width: 143px; padding-left: 6px !important; }
.h-type { width: 120px; }
.h-size { width: 80px; }
.sort { position: absolute; left: 136px; top: -2px; }
.f-list { flex: 1; padding: 4px 0 0 13px; }
.f-row { width: 598px; height: 21px; display: flex; align-items: center; padding-left: 6px; border: 1px solid transparent; color: #666; white-space: nowrap; }
.f-sel { background: #cce8ff; border-color: #99d1ff; }
.c-name { color: #1a1a1a; width: 240px; margin-left: 3px; }
.c-date { width: 144px; }
.c-type { width: 100px; }
.c-size { width: 86px; text-align: right; }
.hscroll { height: 15px; margin-right: 2px; background: #f0f0f0; display: flex; flex: none; align-items: center; }
.hs-btn { width: 16px; display: flex; justify-content: center; }
.hs-thumb { flex: 1; height: 15px; background: #cdcdcd; margin-right: 2px; }

.ex-status { flex: 1; display: flex; align-items: flex-start; padding: 2px 5px 0 14px; color: #33475b; }
.st1 { width: 59px; line-height: 20px; }
.st2 { width: 85px; line-height: 20px; }
.st3 { line-height: 20px; }
.view-btn { width: 22px; height: 22px; display: flex; align-items: center; justify-content: center; border: 1px solid transparent; }
.view-on { background: #cce8ff; border-color: #56a0d8; }

/* Context menu */
.ctx { position: absolute; left: 515px; top: 244px; width: 292px; height: 389px; background: #f0f0f0; border: 1px solid #a0a0a0; box-shadow: 2px 2px 3px rgba(0,0,0,.25); padding: 2px 10px 0 2px; color: #222; }
.m-it { height: 22px; display: flex; align-items: center; padding-left: 31px; position: relative; white-space: nowrap; }
.m-ico { position: absolute; left: 7px; top: 50%; transform: translateY(-50%); }
.strong { font-weight: 700; }
.m-arrow { position: absolute; right: 0; top: 5px; }
.m-sep { height: 1px; background: #a0a0a0; margin: 3px 0 3px 7px; }
.sk { font-family: "Liberation Sans", sans-serif; font-size: 11px; font-weight: 700; fill: #fff; }

/* Watermark */
.watermark { position: absolute; left: 1039px; top: 608px; width: 192px; height: 64px; display: flex; align-items: center; color: rgba(165,165,170,.62); pointer-events: none; }
.wm-t { display: block; width: 68px; flex: none; font-family: "Roboto", sans-serif; font-weight: 400; font-size: 52px; line-height: 64px; transform: scaleX(.6); transform-origin: left center; white-space: nowrap; }
.watermark svg { margin: 0 2px; }
```
